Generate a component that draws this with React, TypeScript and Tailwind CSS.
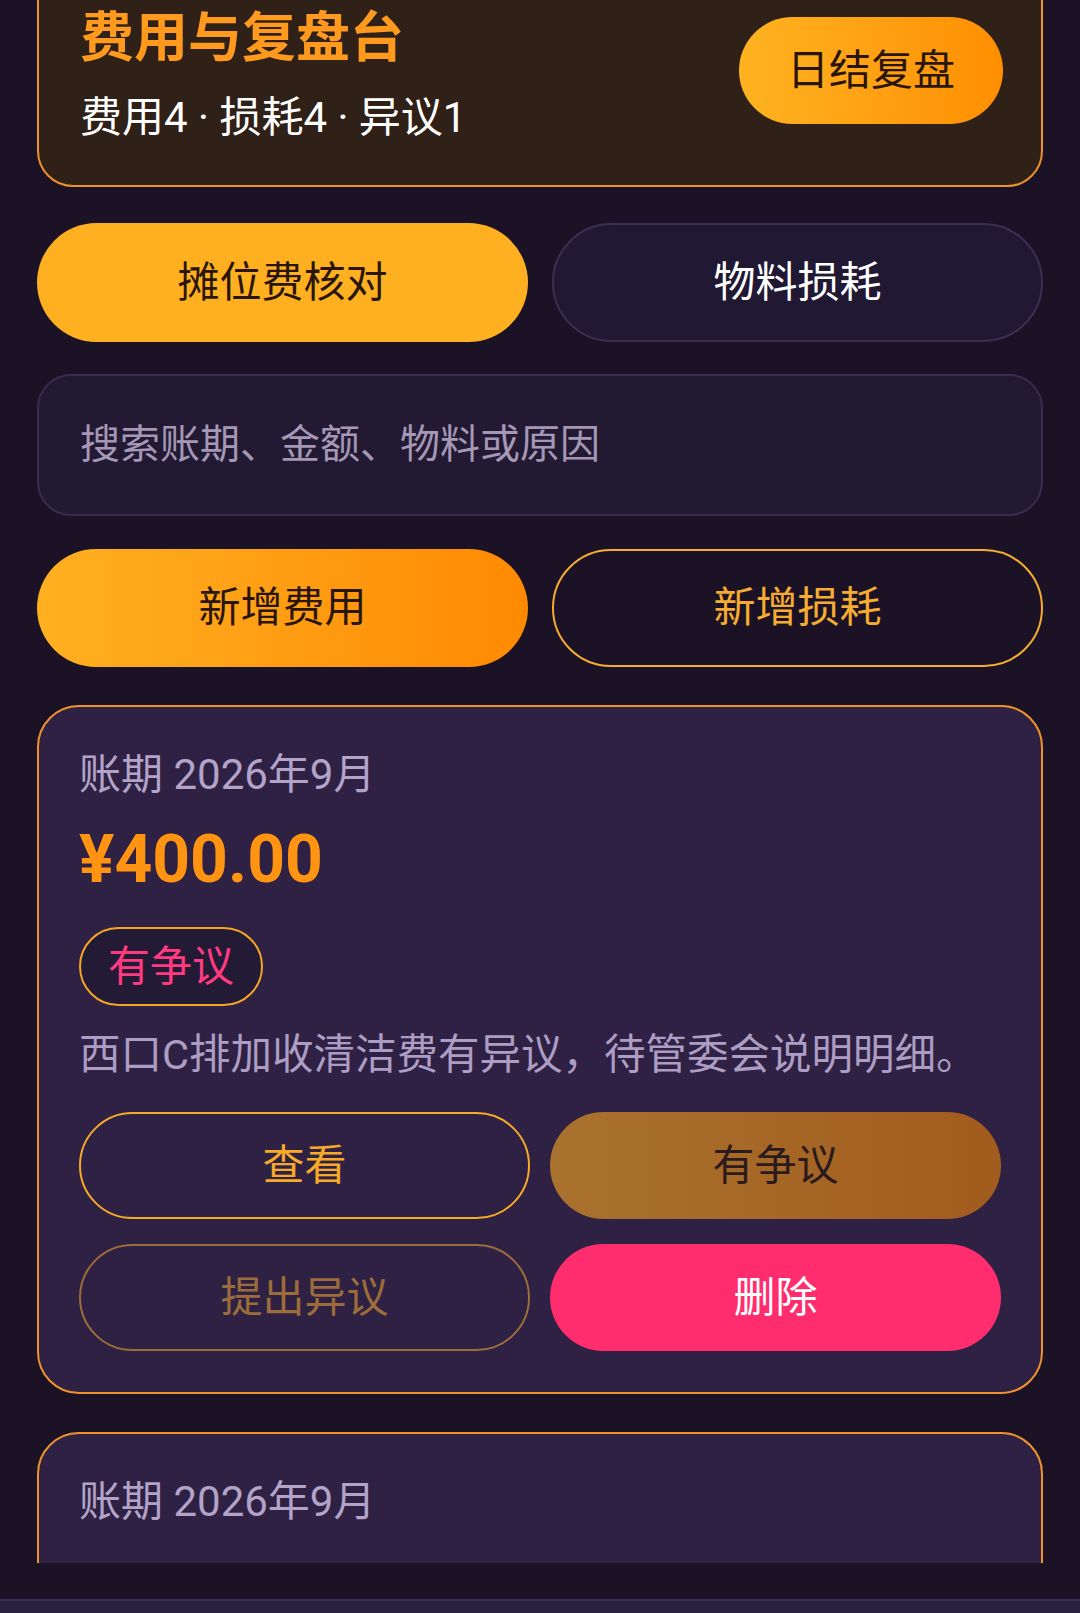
import { ReactNode } from "react";
import clsx from "clsx";

const font = { fontFamily: 'Roboto, "Noto Sans CJK SC", sans-serif' };

type Fee = {
  period: string;
  amount?: string;
  status?: string;
  note?: string;
};

// second card is only peeking in at the bottom of the list
const fees: Fee[] = [
  {
    period: "账期 2026年9月",
    amount: "¥400.00",
    status: "有争议",
    note: "西口C排加收清洁费有异议，待管委会说明明细。",
  },
  { period: "账期 2026年9月" },
];

const Pill = ({
  children,
  className,
}: {
  children: ReactNode;
  className?: string;
}) => (
  <button
    type="button"
    className={clsx(
      "flex items-center justify-center rounded-full text-[42px] leading-none",
      className
    )}
  >
    {children}
  </button>
);

const FeeCard = ({ fee }: { fee: Fee }) => (
  <div className="rounded-[42px] border-2 border-[#f0922b] bg-[#2e2143] px-[40px] pt-[40px] pb-[41px]">
    <p className="text-[42px] leading-[56px] text-[#b3a3c9]">{fee.period}</p>
    {fee.amount ? (
      <>
        <p className="mt-[17px] text-[66px] font-bold leading-[79px] text-[#ff9412]">
          {fee.amount}
        </p>
        <span className="mt-[28px] inline-flex h-[79px] items-center rounded-full border-2 border-[#f5a623] bg-[#231a36] px-[27px] text-[42px] text-[#ff3a80]">
          {fee.status}
        </span>
        <p className="mt-[21px] text-[41.5px] leading-[56px] text-[#ad9dc4]">
          {fee.note}
        </p>
        <div className="mt-[29px] grid grid-cols-2 gap-x-[20px] gap-y-[25px]">
          <Pill className="h-[107px] border-2 border-[#f7a928] text-[#f7a928]">
            查看
          </Pill>
          <Pill className="h-[107px] bg-gradient-to-r from-[#a9722e] to-[#a25c1d] text-[#2b1a1e]">
            有争议
          </Pill>
          <Pill className="h-[107px] border-2 border-[#9c6d3a] text-[#9c6d3a]">
            提出异议
          </Pill>
          <Pill className="h-[107px] bg-[#ff2d6e] text-white">删除</Pill>
        </div>
      </>
    ) : (
      <div className="h-[500px]" />
    )}
  </div>
);

export default function App() {
  return (
    <div
      className="flex h-[1613px] w-[1080px] flex-col overflow-hidden bg-[#1b1226]"
      style={font}
    >
      <div className="h-[1563px] shrink-0 overflow-hidden px-[37px]">
        <div className="-mt-[36px] flex items-start justify-between rounded-[36px] border-2 border-[#f0922b] bg-[#2f2018] pl-[41px] pr-[38px] pt-[37px] pb-[39px]">
          <div>
            <h1 className="pt-[4px] text-[54px] font-bold leading-[64px] text-[#ff9a1e]">
              费用与复盘台
            </h1>
            <p className="mt-[19px] text-[42px] leading-[56px] text-white">
              费用4 · 损耗4 · 异议1
            </p>
          </div>
          <Pill className="mt-[14px] h-[107px] w-[264px] bg-gradient-to-r from-[#ffb320] to-[#ff8f00] text-[#2a1608]">
            日结复盘
          </Pill>
        </div>

        <div className="mt-[36px] grid grid-cols-2 gap-[24px]">
          <Pill className="h-[119px] rounded-[46px] bg-[#ffb020] text-[#2a1608]">
            摊位费核对
          </Pill>
          <Pill className="h-[119px] rounded-[46px] border-2 border-[#3b3052] bg-[#211833] text-white">
            物料损耗
          </Pill>
        </div>

        <div className="mt-[32px] flex h-[142px] items-center rounded-[34px] border-2 border-[#392d4f] bg-[#221a33] px-[41px] text-[40px] text-[#a597b5]">
          搜索账期、金额、物料或原因
        </div>

        <div className="mt-[33px] grid grid-cols-2 gap-[24px]">
          <Pill className="h-[118px] bg-gradient-to-r from-[#ffb020] to-[#ff8a00] text-[#2a1608]">
            新增费用
          </Pill>
          <Pill className="h-[118px] border-2 border-[#f5ac30] text-[#f5ac30]">
            新增损耗
          </Pill>
        </div>

        <div className="mt-[38px] flex flex-col gap-[38px]">
          {fees.map((fee, i) => (
            <FeeCard key={i} fee={fee} />
          ))}
        </div>
      </div>
      <div className="mt-[36px] flex-1 border-t-2 border-[#3d3058] bg-[#2a2040]" />
    </div>
  );
}
